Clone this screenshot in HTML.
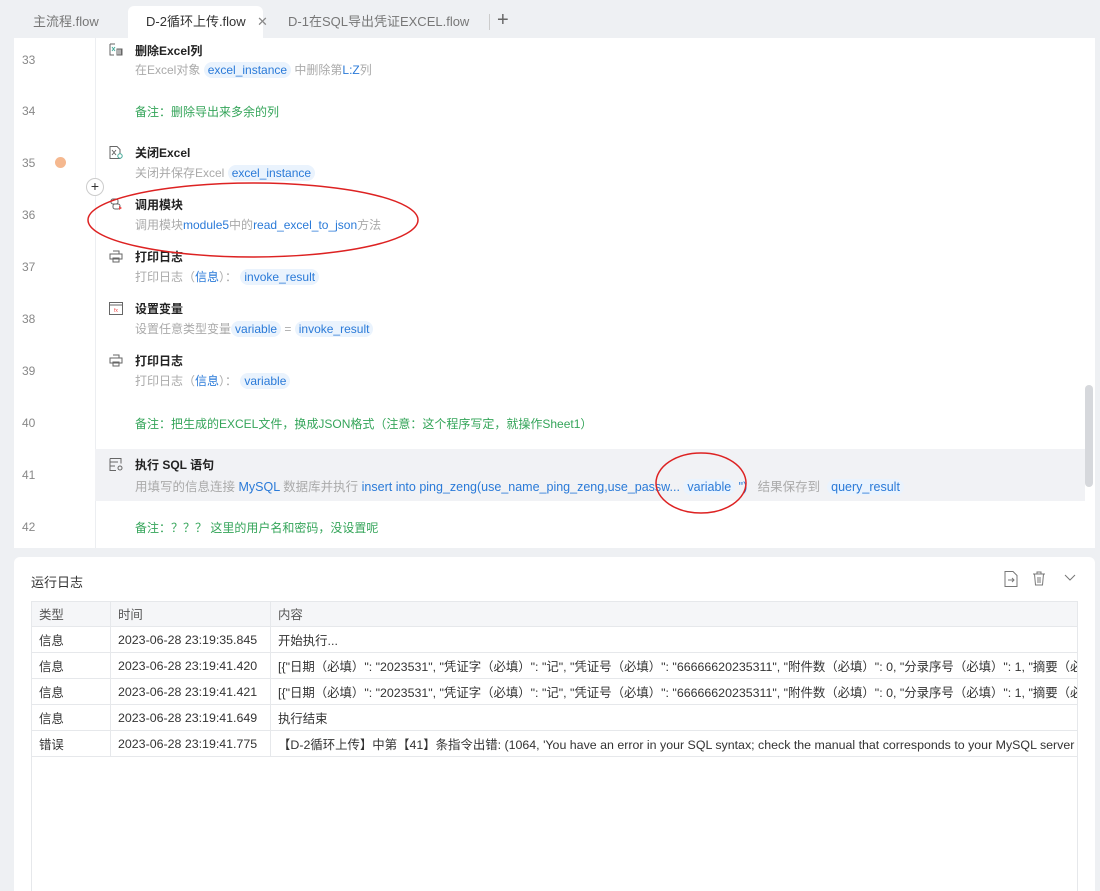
<!DOCTYPE html>
<html><head><meta charset="utf-8"><style>
*{margin:0;padding:0;box-sizing:border-box}
body{width:1100px;height:891px;background:#eef0f3;font-family:"Liberation Sans","Noto Sans CJK SC",sans-serif;font-size:12px;color:#333;position:relative;overflow:hidden}
.a{position:absolute;white-space:nowrap}
.tab{position:absolute;top:8px;height:30px;line-height:28px;font-size:13px;color:#777}
#ed{position:absolute;left:14px;top:38px;width:1081px;height:510px;background:#fff;overflow:hidden}
.ln{position:absolute;left:8px;font-size:12px;color:#888}
.t{position:absolute;left:121px;font-weight:bold;font-size:12px;color:#222}
.d{position:absolute;left:121px;color:#aaa;font-size:12px;white-space:nowrap}
.b{color:#2a7ad8}
.p{background:#eaf3fd;color:#2a7ad8;border-radius:9px;padding:1px 4px}
.g{position:absolute;left:121px;color:#35a55a;font-size:12px}
.ic{position:absolute;left:95px;width:14px;height:13px}
#log{position:absolute;left:14px;top:557px;width:1081px;height:334px;background:#fff;border-radius:6px 6px 0 0}
table{position:absolute;left:17px;top:44px;width:1047px;border-collapse:collapse;table-layout:fixed}
td,th{height:26px;border:1px solid #e6e8eb;font-weight:normal;text-align:left;padding-left:7px;font-size:12.4px;color:#333;white-space:nowrap;overflow:hidden}
th{background:#f5f6f8;color:#555;height:25px}
</style></head><body>
<div class="tab" style="left:33px">主流程.flow</div>
<div style="position:absolute;left:128px;top:6px;width:135px;height:32px;background:#fff;border-radius:6px 6px 0 0"></div>
<div class="tab" style="left:146px;color:#333">D-2循环上传.flow</div>
<div class="tab" style="left:257px;color:#888">✕</div>
<div class="tab" style="left:288px">D-1在SQL导出凭证EXCEL.flow</div>
<div style="position:absolute;left:489px;top:14px;width:1px;height:16px;background:#ccc"></div>
<div class="tab" style="left:497px;font-size:20px;color:#666;top:6px">+</div>

<div id="ed">
<div style="position:absolute;left:81px;top:0;width:1px;height:510px;background:#eceef1"></div>
<div style="position:absolute;left:81px;top:411px;width:990px;height:52px;background:#f1f2f5"></div>
<div style="position:absolute;left:1071px;top:347px;width:8px;height:102px;background:#d6d8dc;border-radius:4px"></div>

<div class="ln" style="top:15px">33</div>
<svg class="ic" style="top:5px" viewBox="0 0 14 13"><path d="M1 1v11h4M1 1h5" stroke="#666" fill="none"/><path d="M3 4l3 4M6 4l-3 4" stroke="#4a9" fill="none"/><path d="M8 6h5v6h-5zM10 6v6M12 6v6" stroke="#666" fill="none"/></svg>
<div class="t" style="top:4px">删除Excel列</div>
<div class="d" style="top:23px">在Excel对象 <span class="p">excel_instance</span> 中删除第<span class="b">L:Z</span>列</div>

<div class="ln" style="top:66px">34</div>
<div class="g" style="top:65px">备注：删除导出来多余的列</div>

<div class="ln" style="top:118px">35</div>
<div style="position:absolute;left:41px;top:119px;width:11px;height:11px;border-radius:50%;background:#f5b88f"></div>
<svg class="ic" style="top:108px" viewBox="0 0 14 13"><path d="M1 .5h7l3 3v9h-10z" stroke="#666" fill="none"/><path d="M3 4l4 5M7 4l-4 5" stroke="#666" fill="none"/><circle cx="11" cy="10" r="2.2" stroke="#4a9" fill="#fff"/></svg>
<div class="t" style="top:106px">关闭Excel</div>
<div class="d" style="top:126px">关闭并保存Excel <span class="p">excel_instance</span></div>
<div style="position:absolute;left:72px;top:140px;width:18px;height:18px;border-radius:50%;border:1px solid #ccc;background:#fff;text-align:center;line-height:15px;font-size:14px;color:#333">+</div>

<div class="ln" style="top:170px">36</div>
<svg class="ic" style="top:160px" viewBox="0 0 14 13"><rect x="2" y="1" width="7" height="5" rx="2" stroke="#666" fill="none"/><rect x="4" y="6" width="7" height="5" rx="2" stroke="#666" fill="none"/><path d="M10 8l3 2-3 2z" fill="#e44"/></svg>
<div class="t" style="top:158px">调用模块</div>
<div class="d" style="top:178px">调用模块<span class="b">module5</span>中的<span class="b">read_excel_to_json</span>方法</div>

<div class="ln" style="top:222px">37</div>
<svg class="ic" style="top:212px" viewBox="0 0 14 13"><path d="M4 1h6v3M1 4h12v5h-12zM4 8h6v4h-6z" stroke="#666" fill="none"/></svg>
<div class="t" style="top:210px">打印日志</div>
<div class="d" style="top:230px">打印日志（<span class="b">信息</span>）： <span class="p">invoke_result</span></div>

<div class="ln" style="top:274px">38</div>
<svg class="ic" style="top:264px" viewBox="0 0 14 13"><rect x=".5" y=".5" width="13" height="12" stroke="#666" fill="none"/><path d="M.5 3h13" stroke="#666"/><text x="5" y="10" font-size="5" fill="#e44">fx</text></svg>
<div class="t" style="top:262px">设置变量</div>
<div class="d" style="top:282px">设置任意类型变量<span class="p">variable</span> = <span class="p">invoke_result</span></div>

<div class="ln" style="top:326px">39</div>
<svg class="ic" style="top:316px" viewBox="0 0 14 13"><path d="M4 1h6v3M1 4h12v5h-12zM4 8h6v4h-6z" stroke="#666" fill="none"/></svg>
<div class="t" style="top:314px">打印日志</div>
<div class="d" style="top:334px">打印日志（<span class="b">信息</span>）： <span class="p">variable</span></div>

<div class="ln" style="top:378px">40</div>
<div class="g" style="top:377px">备注：把生成的EXCEL文件，换成JSON格式（注意：这个程序写定，就操作Sheet1）</div>

<div class="ln" style="top:430px">41</div>
<svg class="ic" style="top:420px" viewBox="0 0 14 13"><path d="M1 .5h11v5M1 .5v12h6M1 4h8M1 8h5" stroke="#666" fill="none"/><circle cx="11" cy="10" r="2" stroke="#666" fill="none"/></svg>
<div class="t" style="top:418px">执行 SQL 语句</div>
<div class="d" style="top:438px;font-size:12.5px">用填写的信息连接 <span class="b">MySQL</span> 数据库并执行 <span class="b">insert into ping_zeng(use_name_ping_zeng,use_passw... </span><span class="p">variable</span><span class="b"> ")</span> &nbsp; 结果保存到 &nbsp;<span class="p">query_result</span></div>

<div class="ln" style="top:482px">42</div>
<div class="g" style="top:481px">备注：？？？ 这里的用户名和密码，没设置呢</div>
</div>

<svg style="position:absolute;left:0;top:0" width="1100" height="891" fill="none" stroke="#d22" stroke-width="1.5">
<ellipse cx="253" cy="220" rx="165" ry="37"/>
<ellipse cx="701" cy="483" rx="45" ry="30"/>
</svg>

<div id="log">
<div class="a" style="left:17px;top:15px;font-size:13px;color:#333">运行日志</div>
<svg class="a" style="left:990px;top:14px" width="14" height="16" viewBox="0 0 14 16" fill="none" stroke="#777"><path d="M1 .5h8l4 4v11h-12z"/><path d="M4 9h6M8 7l2 2-2 2"/></svg>
<svg class="a" style="left:1018px;top:14px" width="14" height="15" viewBox="0 0 14 15" fill="none" stroke="#777"><path d="M1 3h12M5 3v-2h4v2M2.5 3l1 11h7l1-11M6 6v6M8 6v6"/></svg>
<svg class="a" style="left:1050px;top:17px" width="12" height="8" viewBox="0 0 12 8" fill="none" stroke="#777"><path d="M1 1l5 5 5-5"/></svg>
<table>
<colgroup><col style="width:79px"><col style="width:160px"><col></colgroup>
<tr><th>类型</th><th>时间</th><th>内容</th></tr>
<tr><td>信息</td><td>2023-06-28 23:19:35.845</td><td>开始执行...</td></tr>
<tr><td>信息</td><td>2023-06-28 23:19:41.420</td><td>[{"日期（必填）": "2023531", "凭证字（必填）": "记", "凭证号（必填）": "66666620235311", "附件数（必填）": 0, "分录序号（必填）": 1, "摘要（必填）"</td></tr>
<tr><td>信息</td><td>2023-06-28 23:19:41.421</td><td>[{"日期（必填）": "2023531", "凭证字（必填）": "记", "凭证号（必填）": "66666620235311", "附件数（必填）": 0, "分录序号（必填）": 1, "摘要（必填）"</td></tr>
<tr><td>信息</td><td>2023-06-28 23:19:41.649</td><td>执行结束</td></tr>
<tr><td>错误</td><td>2023-06-28 23:19:41.775</td><td>【D-2循环上传】中第【41】条指令出错: (1064, 'You have an error in your SQL syntax; check the manual that corresponds to your MySQL server</td></tr>
</table>
<div style="position:absolute;left:17px;top:200px;width:1047px;height:134px;border-left:1px solid #e6e8eb;border-right:1px solid #e6e8eb"></div>
</div>
</body></html>
